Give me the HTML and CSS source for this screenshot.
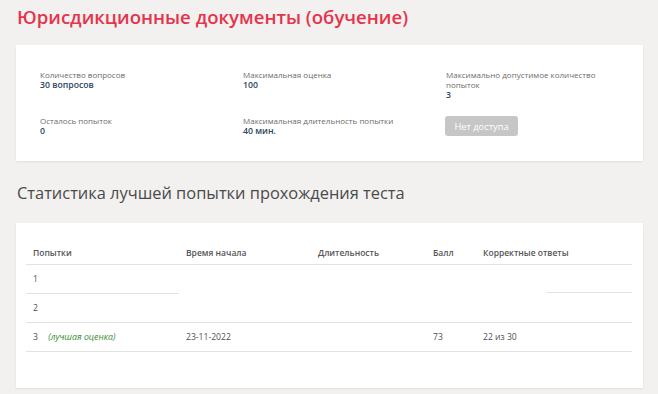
FILE: index.html
```html
<!DOCTYPE html>
<html lang="ru">
<head>
<meta charset="utf-8">
<title>Юрисдикционные документы (обучение)</title>
<link rel="stylesheet" href="styles.css">
</head>
<body>
<h1 class="page-title">Юрисдикционные документы (обучение)</h1>
<section class="card info-card">
  <div class="info-grid">
    <div class="info-item">
      <div class="info-label">Количество вопросов</div>
      <div class="info-value">30 вопросов</div>
    </div>
    <div class="info-item">
      <div class="info-label">Максимальная оценка</div>
      <div class="info-value">100</div>
    </div>
    <div class="info-item">
      <div class="info-label">Максимально допустимое количество<br>попыток</div>
      <div class="info-value">3</div>
    </div>
    <div class="info-item">
      <div class="info-label">Осталось попыток</div>
      <div class="info-value">0</div>
    </div>
    <div class="info-item">
      <div class="info-label">Максимальная длительность попытки</div>
      <div class="info-value">40 мин.</div>
    </div>
    <div class="info-item">
      <button class="btn-disabled" disabled>Нет доступа</button>
    </div>
  </div>
</section>
<h2 class="section-title">Статистика лучшей попытки прохождения теста</h2>
<section class="card stats-card">
  <table class="stats">
    <thead>
      <tr>
        <th class="c1">Попытки</th>
        <th class="c2">Время начала</th>
        <th class="c3">Длительность</th>
        <th class="c4">Балл</th>
        <th class="c5">Корректные ответы</th>
      </tr>
    </thead>
    <tbody>
      <tr class="row-partial">
        <td class="c1 line">1</td>
        <td class="c2"></td>
        <td class="c3"></td>
        <td class="c4"></td>
        <td class="c5 tail-line"></td>
      </tr>
      <tr>
        <td class="c1">2</td>
        <td></td>
        <td></td>
        <td></td>
        <td></td>
      </tr>
      <tr>
        <td class="c1">3 <span class="best">(лучшая оценка)</span></td>
        <td>23-11-2022</td>
        <td></td>
        <td>73</td>
        <td>22 из 30</td>
      </tr>
    </tbody>
  </table>
</section>
</body>
</html>
```
FILE: styles.css
```css
html, body {
  margin: 0;
  padding: 0;
}
body {
  background: #f2f1f0;
  font-family: "Open Sans", "Liberation Sans", sans-serif;
  color: #555;
  width: 658px;
  height: 394px;
  overflow: hidden;
}
.page-title {
  margin: 0;
  padding: 5px 0 0 17px;
  font-size: 18.6px;
  line-height: 24px;
  font-weight: 600;
  color: #e5344c;
}
.card {
  background: #fff;
  margin: 0 15px 0 16px;
  box-shadow: 0 1px 2px rgba(0, 0, 0, 0.08);
}
.info-card {
  margin-top: 16px;
  padding: 25px 0 24px 24px;
}
.info-grid {
  display: grid;
  grid-template-columns: 203px 203px 203px;
  row-gap: 15px;
}
.info-label {
  font-size: 8px;
  line-height: 10px;
  color: #6b6b6b;
}
.info-value {
  font-size: 8.7px;
  line-height: 11px;
  font-weight: 600;
  color: #2d4660;
}
.btn-disabled {
  display: block;
  margin-left: -1px;
  width: 73px;
  height: 20px;
  padding: 0;
  border: none;
  border-radius: 3px;
  background: #c6c6c6;
  color: #fff;
  font-family: "Open Sans", "Liberation Sans", sans-serif;
  font-size: 9.3px;
}
.section-title {
  margin: 0;
  padding: 20px 0 0 17px;
  height: 62px;
  box-sizing: border-box;
  font-size: 16.4px;
  line-height: 24px;
  font-weight: 400;
  color: #4a4a4a;
}
.stats-card {
  margin-top: 0;
  padding: 13px 11px 36px 10px;
}
.stats {
  width: 606px;
  border-collapse: collapse;
  table-layout: fixed;
  font-size: 8.6px;
  color: #505050;
}
.stats th, .stats td {
  text-align: left;
  padding: 0 0 0 7px;
  height: 28px;
  border-bottom: 1px solid #e2e2e2;
  white-space: nowrap;
}
.stats th {
  font-weight: 600;
  font-size: 8.5px;
  color: #555;
  vertical-align: bottom;
  padding-bottom: 6px;
  height: 22px;
}
.stats .c1 { width: 146px; }
.stats .c2 { width: 125px; }
.stats .c3 { width: 108px; }
.stats .c4 { width: 43px; }
.stats .c5 { width: 149px; }
.row-partial td {
  border-bottom: 1px solid transparent;
}
.row-partial td.line {
  border-bottom-color: #e2e2e2;
}
.row-partial td.tail-line {
  border-bottom-color: transparent;
  background: linear-gradient(#e2e2e2, #e2e2e2) no-repeat right bottom / 86px 1px;
}
.best {
  margin-left: 8px;
  font-style: italic;
  font-size: 8.8px;
  color: #3c8a36;
}
```
